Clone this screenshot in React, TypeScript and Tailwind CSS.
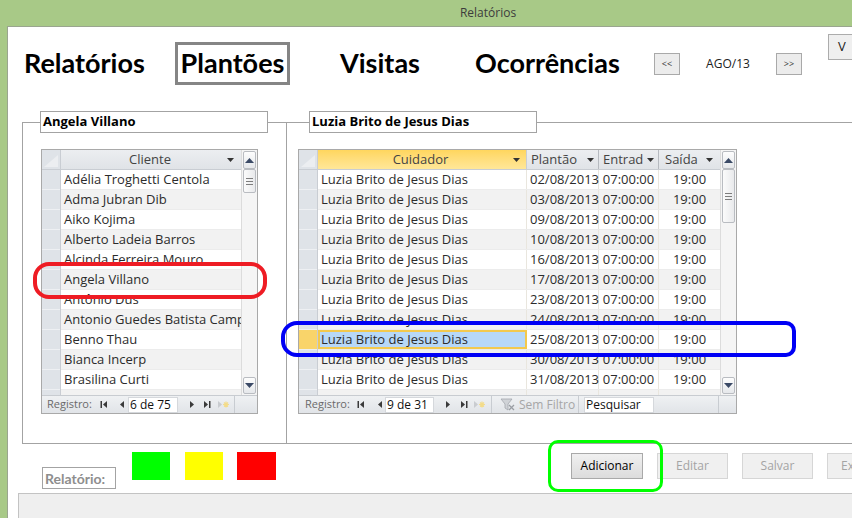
import type { ReactNode } from "react"

const CLIENTS = [
    "Adélia Troghetti Centola",
    "Adma Jubran Dib",
    "Aiko Kojima",
    "Alberto Ladeia Barros",
    "Alcinda Ferreira Mouro",
    "Angela Villano",
    "Antônio Dus",
    "Antonio Guedes Batista Campos",
    "Benno Thau",
    "Bianca Incerp",
    "Brasilina Curti",
    "",
]

const SHIFTS = [
    "02/08/2013", "03/08/2013", "09/08/2013", "10/08/2013", "16/08/2013", "17/08/2013",
    "23/08/2013", "24/08/2013", "25/08/2013", "30/08/2013", "31/08/2013", "",
]

const SELECTED = 8

function Caret() {
    return (
        <svg width="7" height="4" viewBox="0 0 7 4" className="flex-none">
            <path d="M0 0h7L3.5 4z" fill="#333" />
        </svg>
    )
}

function NavIcon({ kind }: { kind: "first" | "prev" | "next" | "last" | "new" }) {
    if (kind === "new") {
        return (
            <svg width="12" height="9" viewBox="0 0 12 9">
                <path d="M1 1l4 3.5L1 8z" fill="#c9ccd0" />
                <path d="M9 1.5v6M6 4.5h6M7 2.5l4 4M11 2.5l-4 4" stroke="#f3dc8a" strokeWidth="1.2" />
            </svg>
        )
    }
    return (
        <svg width="8" height="9" viewBox="0 0 8 9">
            {kind === "first" && <><rect x="0.5" y="1" width="1.5" height="7" fill="#3a3a3a" /><path d="M7 1L3 4.5 7 8z" fill="#3a3a3a" /></>}
            {kind === "prev" && <path d="M6 1L2 4.5 6 8z" fill="#3a3a3a" />}
            {kind === "next" && <path d="M2 1l4 3.5L2 8z" fill="#3a3a3a" />}
            {kind === "last" && <><path d="M1 1l4 3.5L1 8z" fill="#3a3a3a" /><rect x="6" y="1" width="1.5" height="7" fill="#3a3a3a" /></>}
        </svg>
    )
}

function ScrollBar({ thumb }: { thumb: number }) {
    return (
        <div className="w-[16px] flex-none flex flex-col bg-[#f5f5f5] border-l border-[#dcdcdc]">
            <div className="h-[18px] mx-[1px] mt-[1px] flex items-center justify-center border border-[#b9bcc1] rounded-[2px] bg-gradient-to-b from-[#fdfdfd] to-[#e6e8eb]">
                <svg width="9" height="5" viewBox="0 0 9 5"><path d="M0 5L4.5 0 9 5z" fill="#3b4a66" /></svg>
            </div>
            <div
                className="mx-[1px] flex flex-col items-center justify-center gap-[2px] border border-[#b9bcc1] rounded-[2px] bg-gradient-to-r from-[#fbfbfb] to-[#e9eaec]"
                style={{ height: thumb }}
            >
                <div className="w-[7px] h-px bg-[#7d7d7d]" />
                <div className="w-[7px] h-px bg-[#7d7d7d]" />
                <div className="w-[7px] h-px bg-[#7d7d7d]" />
            </div>
            <div className="mt-auto h-[17px] mx-[1px] mb-[1px] flex items-center justify-center border border-[#b9bcc1] rounded-[2px] bg-gradient-to-b from-[#fdfdfd] to-[#e6e8eb]">
                <svg width="9" height="5" viewBox="0 0 9 5"><path d="M0 0h9L4.5 5z" fill="#3b4a66" /></svg>
            </div>
        </div>
    )
}

function NavBar({ value, leftPad, labelW, firstW, prevW, inputW, nextW, lastW, newW, children }: {
    value: string, leftPad: number, labelW: number, firstW: number, prevW: number, inputW: number,
    nextW: number, lastW: number, newW: number, children?: ReactNode
}) {
    return (
        <div className="h-[18px] flex-none flex items-center bg-gradient-to-b from-[#eff1f3] to-[#e1e4e8] border-t border-[#c8ccd1] text-[11px] text-[#6a6a6a] overflow-hidden">
            <span className="flex-none" style={{ marginLeft: leftPad, width: labelW }}>Registro:</span>
            <span className="flex-none flex" style={{ width: firstW }}><NavIcon kind="first" /></span>
            <span className="flex-none flex" style={{ width: prevW }}><NavIcon kind="prev" /></span>
            <span className="flex-none h-[16px] bg-white border border-[#d5d8dc] pl-[1px] leading-[14px] text-[12px] text-[#111]" style={{ width: inputW }}>{value}</span>
            <span className="flex-none flex pl-[10px]" style={{ width: nextW }}><NavIcon kind="next" /></span>
            <span className="flex-none flex" style={{ width: lastW }}><NavIcon kind="last" /></span>
            <span className="flex-none flex border-r border-[#c8ccd1] h-full items-center" style={{ width: newW }}><NavIcon kind="new" /></span>
            {children}
        </div>
    )
}

function ClientList() {
    return (
        <div className="w-[217px] h-[265px] border border-[#a9a9a9] flex flex-col bg-white">
            <div className="h-[245px] flex">
                <div className="flex-1 flex overflow-hidden">
                    <div className="w-[19px] flex-none flex flex-col bg-[#dfe3e8] border-r border-[#c9cdd3]">
                        <div className="h-[20px] flex-none relative border-b border-[#c9cdd3]">
                            <svg width="14" height="12" viewBox="0 0 14 12" className="absolute right-[2px] bottom-[2px]"><path d="M14 0v12H0z" fill="#eceef1" /></svg>
                        </div>
                        {CLIENTS.map((c, i) => (
                            <div key={c + i} className="h-[20px] flex-none border-b border-[#eef0f3]" />
                        ))}
                    </div>
                    <div className="flex-1 flex flex-col min-w-0">
                        <div className="h-[20px] flex-none flex items-center bg-gradient-to-b from-[#eceef1] to-[#e0e3e7] border-b border-[#c9cdd3] text-[#444]">
                            <span className="flex-1 text-center pl-[12px]">Cliente</span>
                            <span className="mr-[7px] flex"><Caret /></span>
                        </div>
                        {CLIENTS.map((c, i) => (
                            <div key={c + i} className={`h-[20px] flex-none flex items-center pl-[3px] whitespace-nowrap text-[#2b2b2b] border-b border-[#ececec] ${i % 2 === 0 ? "bg-white" : "bg-[#f2f2f2]"}`}>
                                {c}
                            </div>
                        ))}
                    </div>
                </div>
                <ScrollBar thumb={24} />
            </div>
            <NavBar value="6 de 75" leftPad={5} labelW={53} firstW={18} prevW={10} inputW={50} nextW={25} lastW={14} newW={18} />
        </div>
    )
}

function ShiftGrid() {
    return (
        <div className="w-[439px] h-[265px] border border-[#a9a9a9] flex flex-col bg-white">
            <div className="h-[245px] flex">
                <div className="flex-1 flex overflow-hidden">
                    <div className="w-[19px] flex-none flex flex-col bg-[#dfe3e8] border-r border-[#c9cdd3]">
                        <div className="h-[20px] flex-none relative border-b border-[#c9cdd3]">
                            <svg width="14" height="12" viewBox="0 0 14 12" className="absolute right-[2px] bottom-[2px]"><path d="M14 0v12H0z" fill="#eceef1" /></svg>
                        </div>
                        {SHIFTS.map((d, i) => (
                            <div key={d + i} className={`h-[20px] flex-none border-b border-[#eef0f3] ${i === SELECTED ? "bg-[#f9d46a]" : ""}`} />
                        ))}
                    </div>
                    <div className="flex-1 flex flex-col min-w-0">
                        <div className="h-[20px] flex-none flex items-stretch border-b border-[#c9cdd3] text-[#444]">
                            <div className="w-[209px] flex-none flex items-center bg-gradient-to-b from-[#ffd65e] to-[#ffe798] border-r border-[#c9cdd3]">
                                <span className="flex-1 text-center pl-[10px]">Cuidador</span>
                                <span className="mr-[6px] flex"><Caret /></span>
                            </div>
                            <div className="w-[72px] flex-none flex items-center pl-[4px] bg-gradient-to-b from-[#eceef1] to-[#e0e3e7] border-r border-[#b6bac0]">
                                <span>Plantão</span>
                                <span className="ml-auto mr-[4px] flex"><Caret /></span>
                            </div>
                            <div className="w-[60px] flex-none flex items-center pl-[4px] bg-gradient-to-b from-[#eceef1] to-[#e0e3e7] border-r border-[#b6bac0]">
                                <span>Entrad</span>
                                <span className="ml-auto mr-[4px] flex"><Caret /></span>
                            </div>
                            <div className="flex-1 flex items-center pl-[6px] bg-gradient-to-b from-[#eceef1] to-[#e0e3e7]">
                                <span>Saída</span>
                                <span className="ml-auto mr-[7px] flex"><Caret /></span>
                            </div>
                        </div>
                        {SHIFTS.map((d, i) => {
                            const sel = i === SELECTED
                            const filled = d !== ""
                            const bg = sel ? "bg-white" : i % 2 === 0 ? "bg-white" : "bg-[#f2f2f2]"
                            return (
                                <div key={d + i} className={`h-[20px] flex-none flex text-[#2b2b2b] whitespace-nowrap border-b border-[#ececec] ${bg}`}>
                                    <div className={`w-[209px] flex-none flex items-center ${sel ? "bg-[#b7d8f8] border-2 border-[#f3c94e] pl-[1px]" : "pl-[3px] border-r border-[#e9e6de]"}`}>
                                        {filled ? "Luzia Brito de Jesus Dias" : ""}
                                    </div>
                                    <div className="w-[72px] flex-none flex items-center pl-[3px] border-r border-[#e9e6de]">{d}</div>
                                    <div className="w-[60px] flex-none flex items-center justify-center border-r border-[#e9e6de]">{filled ? "07:00:00" : ""}</div>
                                    <div className="flex-1 flex items-center justify-center">{filled ? "19:00" : ""}</div>
                                </div>
                            )
                        })}
                    </div>
                </div>
                <ScrollBar thumb={54} />
            </div>
            <NavBar value="9 de 31" leftPad={6} labelW={52} firstW={19} prevW={9} inputW={49} nextW={26} lastW={13} newW={19}>
                <span className="flex-none w-[27px] pl-[8px] flex">
                    <svg width="15" height="13" viewBox="0 0 15 13">
                        <path d="M1 1h11L8 6v6L5 10V6z" fill="#d0d3d7" stroke="#a3a7ad" strokeWidth="0.8" />
                        <path d="M9 7l5 5M14 7l-5 5" stroke="#9a9ea4" strokeWidth="1.3" />
                    </svg>
                </span>
                <span className="flex-none w-[60px] h-full flex items-center text-[12px] text-[#a6a6a6] border-r border-[#c8ccd1]">Sem Filtro</span>
                <span className="flex-none ml-[5px] w-[70px] h-[16px] bg-white border border-[#d5d8dc] pl-[1px] leading-[14px] text-[12px] text-[#111]">Pesquisar</span>
                <span className="flex-none ml-[64px] h-full border-l border-[#c8ccd1]" />
            </NavBar>
        </div>
    )
}

export default function App() {
    const tab = "flex-none h-[43px] flex items-center text-[27px]"
    const actionBtn = "flex-none h-[26px] w-[71px] mt-[9px] ml-[14px] flex items-center justify-center text-[12px] border"
    return (
        <div className="w-[852px] h-[518px] relative overflow-hidden flex flex-col bg-[#a8c987] font-['Open_Sans',sans-serif] text-[13px]">
            <div className="h-[26px] flex-none flex items-center justify-center text-[12px] text-[#3c3c3c] pl-[124px]">
                Relatórios
            </div>
            <div className="flex-1 flex min-h-0">
                <div className="w-[7px] flex-none" />
                <div className="flex-1 flex flex-col bg-white border-l border-t border-[#9aa58f] min-w-0">
                    <div className="h-[84px] flex-none flex items-start pt-[15px] pl-[16px] font-['Lato',sans-serif] font-bold text-black">
                        <div className={`${tab} w-[151px]`}>Relatórios</div>
                        <div className={`${tab} w-[115px] border-[3px] border-[#858585] justify-center`}>Plantões</div>
                        <div className="flex-none w-[50px]" />
                        <div className={`${tab} w-[135px]`}>Visitas</div>
                        <div className={`${tab} w-[179px]`}>Ocorrências</div>
                        <div className="flex-none w-[26px] h-[22px] mt-[11px] flex items-center justify-center bg-[#ececec] border border-[#a9a9a9] text-[9px] font-normal font-['Open_Sans',sans-serif] text-[#333]">&lt;&lt;</div>
                        <div className="flex-none w-[96px] h-[43px] flex items-center justify-center text-[12px] font-normal font-['Open_Sans',sans-serif] text-[#222]">AGO/13</div>
                        <div className="flex-none w-[26px] h-[22px] mt-[11px] flex items-center justify-center bg-[#ececec] border border-[#a9a9a9] text-[9px] font-normal font-['Open_Sans',sans-serif] text-[#333]">&gt;&gt;</div>
                        <div className="flex-none w-[50px] h-[26px] mt-[-8px] ml-[26px] flex items-center pl-[9px] bg-[#efefef] border border-[#acacac] text-[13px] font-normal font-['Open_Sans',sans-serif] text-[#222]">V</div>
                    </div>

                    <div className="flex-none flex mt-[11px]">
                        <div className="relative flex-none w-[278px] ml-[14px] h-[322px] border-t border-l border-b border-[#a3a3a3] pt-[26px] pl-[18px]">
                            <div className="absolute -top-[12px] left-[17px] w-[228px] h-[22px] bg-white border border-[#a3a3a3] pl-[2px] flex items-center font-bold text-black">
                                Angela Villano
                            </div>
                            <ClientList />
                        </div>
                        <div className="relative flex-1 h-[322px] border-t border-l border-b border-[#a3a3a3] pt-[26px] pl-[11px] -ml-[14px]">
                            <div className="absolute -top-[12px] left-[22px] w-[228px] h-[22px] bg-white border border-[#a3a3a3] pl-[2px] flex items-center font-bold text-black">
                                Luzia Brito de Jesus Dias
                            </div>
                            <ShiftGrid />
                        </div>
                    </div>

                    <div className="h-[49px] flex-none flex items-start">
                        <div className="flex-none ml-[34px] mt-[23px] w-[74px] h-[22px] border border-[#a3a3a3] flex items-center pl-[2px] font-['Lato',sans-serif] font-bold text-[14px] text-[#8e8e8e]">Relatório:</div>
                        <div className="flex-none ml-[16px] mt-[8px] w-[38px] h-[28px] bg-[#00ff00]" />
                        <div className="flex-none ml-[15px] mt-[8px] w-[38px] h-[28px] bg-[#ffff00]" />
                        <div className="flex-none ml-[14px] mt-[8px] w-[39px] h-[28px] bg-[#ff0000]" />
                        <div className={`${actionBtn} ml-[295px] w-[72px] bg-gradient-to-b from-[#f0f0f0] to-[#dcdcdc] border-[#a9a9a9] text-black`}>Adicionar</div>
                        <div className={`${actionBtn} bg-[#f0f0f0] border-[#d6d6d6] text-[#a4a4a4]`}>Editar</div>
                        <div className={`${actionBtn} bg-[#f0f0f0] border-[#d6d6d6] text-[#a4a4a4]`}>Salvar</div>
                        <div className={`${actionBtn} justify-start pl-[13px] bg-[#f0f0f0] border-[#d6d6d6] text-[#a4a4a4]`}>Excluir</div>
                    </div>

                    <div className="flex-1 ml-[10px] bg-[#efefef] border-t border-l border-[#c3c3c3]" />
                </div>
            </div>

            <div className="absolute left-[33px] top-[262px] w-[234px] h-[37px] border-[4px] border-[#ee1c24] rounded-[16px] pointer-events-none" />
            <div className="absolute left-[281px] top-[321px] w-[515px] h-[36px] border-[4px] border-[#0000f5] rounded-l-[16px] rounded-r-[10px] pointer-events-none" />
            <div className="absolute left-[548px] top-[440px] w-[115px] h-[52px] border-[3px] border-[#00ff00] rounded-[10px] pointer-events-none" />
        </div>
    )
}
